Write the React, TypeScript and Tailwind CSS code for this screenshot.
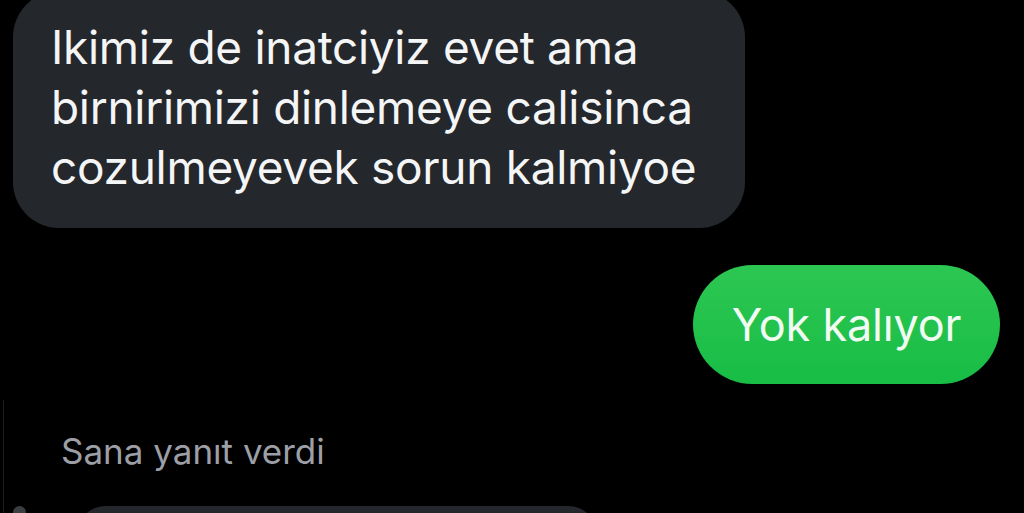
export default function App() {
  return (
    <div
      className="relative flex h-[513px] w-[1024px] flex-col overflow-hidden bg-black"
      style={{ fontFamily: "Inter, 'Liberation Sans', sans-serif" }}
    >
      {/* thin thread line on the far left */}
      <div className="absolute left-[3px] top-[400px] h-[113px] w-px bg-[#1a1b1d]" />

      {/* incoming bubble */}
      <div className="-mt-[9px] ml-[13px] h-[237px] w-[732px] shrink-0 rounded-[46px] bg-[#24272b] pl-[38px] pt-[26px] text-[46px] leading-[60px] tracking-[-0.3px] text-[#f4f5f6]">
        <p>Ikimiz de inatciyiz evet ama</p>
        <p>birnirimizi dinlemeye calisinca</p>
        <p>cozulmeyevek sorun kalmiyoe</p>
      </div>

      {/* outgoing bubble */}
      <div className="mr-[24px] mt-[37px] flex h-[119px] w-[307px] shrink-0 items-center justify-center self-end rounded-full bg-gradient-to-b from-[#2cc752] to-[#17bd45] text-[45px] tracking-[-0.2px] text-[#f1fbf3]">
        Yok kalıyor
      </div>

      {/* reply label */}
      <p className="ml-[61px] mt-[47px] shrink-0 text-[35px] leading-[40px] text-[#9c9fa5]">Sana yanıt verdi</p>

      {/* next message peeking in */}
      <div className="mt-[35px] flex shrink-0 items-start">
        <div className="ml-[13px] h-[13px] w-[13px] rounded-full bg-[#3b3e43]" />
        <div className="ml-[50px] h-[60px] w-[522px] rounded-[40px] bg-[#24272b]" />
      </div>
    </div>
  )
}
